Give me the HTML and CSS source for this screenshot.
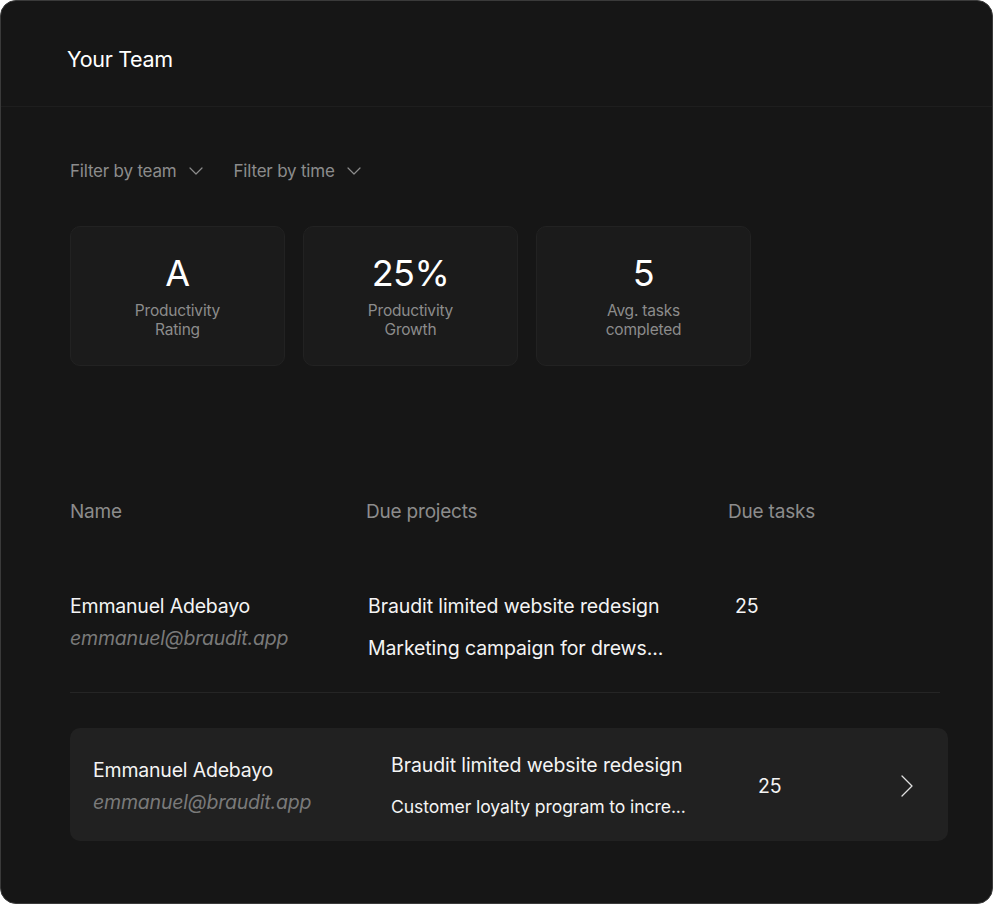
FILE: index.html
```html
<!DOCTYPE html>
<html lang="en">
<head>
<meta charset="utf-8">
<title>Your Team</title>
<link rel="stylesheet" href="styles.css">
</head>
<body>
<div class="card">
  <header class="card-header">
    <h1 class="title">Your Team</h1>
  </header>
  <main class="content">
    <div class="filters">
      <button class="filter">Filter by team
        <svg class="chev" width="14" height="8" viewBox="0 0 14 8"><path d="M1 1l6 6 6-6" fill="none" stroke="currentColor" stroke-width="1.2" stroke-linecap="round" stroke-linejoin="round"/></svg>
      </button>
      <button class="filter">Filter by time
        <svg class="chev" width="14" height="8" viewBox="0 0 14 8"><path d="M1 1l6 6 6-6" fill="none" stroke="currentColor" stroke-width="1.2" stroke-linecap="round" stroke-linejoin="round"/></svg>
      </button>
    </div>
    <div class="stats">
      <div class="stat">
        <div class="stat-value">A</div>
        <div class="stat-label">Productivity<br>Rating</div>
      </div>
      <div class="stat">
        <div class="stat-value">25%</div>
        <div class="stat-label">Productivity<br>Growth</div>
      </div>
      <div class="stat">
        <div class="stat-value">5</div>
        <div class="stat-label">Avg. tasks<br>completed</div>
      </div>
    </div>
    <div class="table">
      <div class="thead">
        <div>Name</div>
        <div>Due projects</div>
        <div>Due tasks</div>
      </div>
      <div class="row">
        <div class="person">
          <div class="name">Emmanuel Adebayo</div>
          <div class="email">emmanuel@braudit.app</div>
        </div>
        <div class="projects">
          <div class="proj">Braudit limited website redesign</div>
          <div class="proj">Marketing campaign for drews...</div>
        </div>
        <div class="tasks">25</div>
      </div>
      <div class="row row-active">
        <div class="person">
          <div class="name">Emmanuel Adebayo</div>
          <div class="email">emmanuel@braudit.app</div>
        </div>
        <div class="projects">
          <div class="proj">Braudit limited website redesign</div>
          <div class="proj proj-sm">Customer loyalty program to incre...</div>
        </div>
        <div class="tasks tasks-mid">25</div>
        <svg class="row-chev" width="14" height="24" viewBox="0 0 14 24"><path d="M2 2l10 10-10 10" fill="none" stroke="currentColor" stroke-width="1.3" stroke-linecap="round" stroke-linejoin="round"/></svg>
      </div>
    </div>
  </main>
</div>
</body>
</html>
```

FILE: styles.css
```css
* { box-sizing: border-box; }
html, body {
  margin: 0;
  padding: 0;
  background: #ffffff;
}
body {
  font-family: Inter, "Noto Sans", "Liberation Sans", sans-serif;
  color: #f2f2f2;
}
.card {
  width: 993px;
  height: 904px;
  background: #161616;
  border: 1.5px solid #3a3a3a;
  border-radius: 16px;
  overflow: hidden;
}
.card-header {
  height: 106px;
  border-bottom: 1px solid #1e1e1e;
  display: flex;
  align-items: center;
  padding-left: 66px;
  padding-top: 10px;
}
.title {
  margin: 0;
  font-size: 21.5px;
  font-weight: 400;
  letter-spacing: -0.3px;
  color: #ffffff;
}
.content {
  padding: 0 44px 0 69px;
}
.filters {
  display: flex;
  gap: 31px;
  margin-top: 51px;
  height: 26px;
  align-items: center;
}
.filter {
  display: flex;
  align-items: center;
  gap: 12px;
  background: none;
  border: 0;
  padding: 0;
  font: inherit;
  font-size: 17px;
  color: #8c8c8c;
  letter-spacing: -0.2px;
}
.chev { color: #8c8c8c; }
.stats {
  display: flex;
  gap: 18px;
  margin-top: 42px;
}
.stat {
  width: 215px;
  height: 140px;
  background: #1b1b1b;
  border: 1px solid #222222;
  border-radius: 10px;
  display: flex;
  flex-direction: column;
  align-items: center;
  padding-top: 26px;
}
.stat-value {
  font-size: 36px;
  line-height: 40px;
  color: #ffffff;
  letter-spacing: -0.5px;
}
.stat-label {
  margin-top: 8px;
  font-size: 15.5px;
  line-height: 19px;
  color: #8c8c8c;
  text-align: center;
  letter-spacing: -0.2px;
}
.table {
  margin-top: 130px;
}
.thead {
  display: grid;
  grid-template-columns: 296px 362px 1fr;
  font-size: 19px;
  color: #8c8c8c;
  height: 30px;
  align-items: center;
  letter-spacing: -0.2px;
}
.row {
  display: grid;
  grid-template-columns: 298px 367px 1fr;
  align-items: start;
  letter-spacing: -0.2px;
}
.row:not(.row-active) {
  margin-top: 67px;
  padding-bottom: 31px;
  border-bottom: 1px solid #252525;
  margin-right: 8px;
}
.name {
  font-size: 19.5px;
  line-height: 26px;
  color: #f4f4f4;
}
.email {
  margin-top: 6px;
  font-size: 19.5px;
  line-height: 26px;
  font-style: italic;
  color: #7a7a7a;
}
.proj {
  font-size: 19.5px;
  line-height: 26px;
  color: #f4f4f4;
  letter-spacing: -0.1px;
}
.proj + .proj { margin-top: 16px; }
.tasks {
  font-size: 19.5px;
  line-height: 26px;
  color: #f4f4f4;
}
.row-active {
  margin-top: 35px;
  background: #212121;
  border-radius: 10px;
  padding: 21px 0 19px 23px;
  grid-template-columns: 298px 367px 1fr 48px;
  align-items: center;
  height: 113px;
}
.row-active .proj-sm {
  font-size: 17.6px;
  margin-top: 16px;
}
.row-active .email { margin-top: 6px; }
.row-chev {
  color: #e0e0e0;
}
```
